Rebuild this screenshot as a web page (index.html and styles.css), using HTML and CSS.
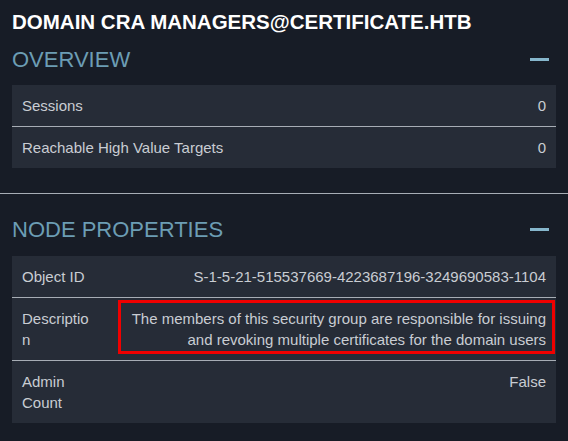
FILE: index.html
```html
<!DOCTYPE html>
<html>
<head>
<meta charset="utf-8">
<link rel="stylesheet" href="styles.css">
</head>
<body>
<div class="panel">
  <h1 class="title">DOMAIN CRA MANAGERS@CERTIFICATE.HTB</h1>
  <section class="section">
    <div class="section-head"><span class="section-name">OVERVIEW</span><span class="minus"></span></div>
    <div class="table simple">
      <div class="row"><span class="label">Sessions</span><span class="value">0</span></div>
      <div class="row"><span class="label">Reachable High Value Targets</span><span class="value">0</span></div>
    </div>
  </section>
  <hr class="sep">
  <section class="section">
    <div class="section-head"><span class="section-name">NODE PROPERTIES</span><span class="minus"></span></div>
    <div class="table props">
      <div class="row"><span class="label">Object ID</span><span class="value">S-1-5-21-515537669-4223687196-3249690583-1104</span></div>
      <div class="row"><span class="label">Description</span><span class="value marked">The members of this security group are responsible for issuing and revoking multiple certificates for the domain users</span></div>
      <div class="row"><span class="label">Admin Count</span><span class="value">False</span></div>
    </div>
  </section>
</div>
</body>
</html>
```
FILE: styles.css
```css
html, body {
  margin: 0;
  padding: 0;
  background: #171c26;
}
body {
  font-family: "Liberation Sans", Arial, sans-serif;
  color: #c9cdd3;
}
.panel {
  display: flex;
  flex-direction: column;
}
.title {
  margin: 0;
  padding: 10px 12px 0;
  font-size: 20.5px;
  line-height: 24px;
  font-weight: bold;
  color: #ffffff;
}
.section {
  padding: 0 12px;
}
.section-head {
  display: flex;
  align-items: center;
  justify-content: space-between;
  height: 51px;
  padding-right: 7px;
}
.section-name {
  font-size: 22px;
  color: #6c9db4;
  line-height: 26px;
}
.minus {
  width: 19px;
  height: 3px;
  background: #86b6cc;
}
.table {
  background: #262c37;
  font-size: 15px;
  line-height: 21px;
}
.row {
  display: flex;
  justify-content: space-between;
  padding: 10px;
}
.row + .row {
  border-top: 1px solid #a7adb5;
}
.props .row {
  display: grid;
  grid-template-columns: 70px 1fr;
  column-gap: 26px;
}
.props .label {
  overflow-wrap: anywhere;
  min-width: 0;
}
.props .value {
  text-align: right;
}
.marked {
  position: relative;
}
.marked::after {
  content: "";
  position: absolute;
  top: -8px;
  bottom: -4px;
  left: 0;
  right: -9px;
  border: 3px solid #f00000;
}
.sep {
  margin: 25px 0 0;
  border: 0;
  border-top: 1px solid #a7adb5;
  height: 0;
}
.sep + .section .section-head {
  margin-top: 9px;
  height: 53px;
}
```
